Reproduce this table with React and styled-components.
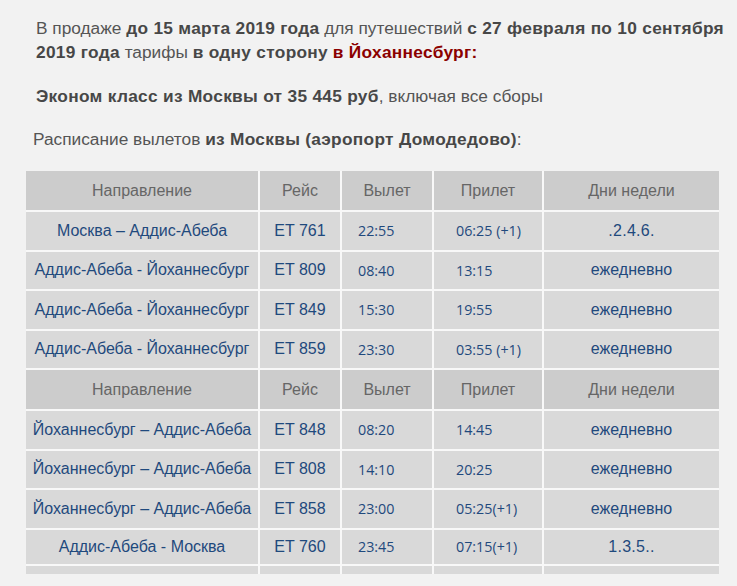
import styled, { createGlobalStyle } from 'styled-components'

const GlobalStyle = createGlobalStyle`
  body {
    margin: 0;
    background: #f2f2f2;
    font-family: "Liberation Sans", Arial, sans-serif;
  }
`

const outbound = [
  { route: 'Москва – Аддис-Абеба', flight: 'ET 761', dep: '22:55', arr: '06:25 (+1)', days: '.2.4.6.' },
  { route: 'Аддис-Абеба - Йоханнесбург', flight: 'ET 809', dep: '08:40', arr: '13:15', days: 'ежедневно' },
  { route: 'Аддис-Абеба - Йоханнесбург', flight: 'ET 849', dep: '15:30', arr: '19:55', days: 'ежедневно' },
  { route: 'Аддис-Абеба - Йоханнесбург', flight: 'ET 859', dep: '23:30', arr: '03:55 (+1)', days: 'ежедневно' },
]

const inbound = [
  { route: 'Йоханнесбург – Аддис-Абеба', flight: 'ET 848', dep: '08:20', arr: '14:45', days: 'ежедневно' },
  { route: 'Йоханнесбург – Аддис-Абеба', flight: 'ET 808', dep: '14:10', arr: '20:25', days: 'ежедневно' },
  { route: 'Йоханнесбург – Аддис-Абеба', flight: 'ET 858', dep: '23:00', arr: '05:25(+1)', days: 'ежедневно' },
  { route: 'Аддис-Абеба - Москва', flight: 'ET 760', dep: '23:45', arr: '07:15(+1)', days: '1.3.5..', short: true },
]

function HeadRow() {
  return (
    <tr>
      <Th>Направление</Th>
      <Th>Рейс</Th>
      <Th>Вылет</Th>
      <Th>Прилет</Th>
      <Th>Дни недели</Th>
    </tr>
  )
}

function FlightRow({ f }) {
  return (
    <Row $short={f.short}>
      <Td>{f.route}</Td>
      <Td>{f.flight}</Td>
      <TimeTd $pad={16}>{f.dep}</TimeTd>
      <TimeTd $pad={22}>{f.arr}</TimeTd>
      <Td $days={f.days !== 'ежедневно'}>{f.days}</Td>
    </Row>
  )
}

function App() {
  return (
    <Page>
      <GlobalStyle />
      <Intro>
        В продаже <b>до 15 марта 2019 года</b> для путешествий <b>с 27 февраля по 10 сентября 2019 года</b> тарифы <b>в одну сторону</b> <Red>в Йоханнесбург:</Red>
      </Intro>
      <Price>
        <b>Эконом класс из Москвы от 35 445 руб</b>, включая все сборы
      </Price>
      <Caption>
        Расписание вылетов <b>из Москвы (аэропорт Домодедово)</b>:
      </Caption>
      <Table>
        <colgroup>
          <col style={{ width: 233 }} />
          <col style={{ width: 82 }} />
          <col style={{ width: 92 }} />
          <col style={{ width: 110 }} />
          <col style={{ width: 176 }} />
        </colgroup>
        <tbody>
          <HeadRow />
          {outbound.map((f, i) => <FlightRow key={'o' + i} f={f} />)}
          <HeadRow />
          {inbound.map((f, i) => <FlightRow key={'i' + i} f={f} />)}
          <tr>
            <Spacer />
            <Spacer />
            <Spacer />
            <Spacer />
            <Spacer />
          </tr>
        </tbody>
      </Table>
    </Page>
  )
}

const Page = styled.div`
  width: 737px;
  height: 586px;
  padding: 16px 0 0 26px;
  box-sizing: border-box;
  overflow: hidden;
`

const Text = styled.p`
  margin: 0;
  font-size: 17.3px;
  line-height: 24px;
  color: #555555;
  white-space: nowrap;
  b {
    color: #474747;
    letter-spacing: 0.3px;
  }
`

const Intro = styled(Text)`
  margin-left: 10px;
  white-space: normal;
  width: 700px;
`

const Red = styled.b`
  && {
    color: #8b0000;
  }
`

const Price = styled(Text)`
  margin: 20px 0 0 10px;
`

const Caption = styled(Text)`
  margin: 19px 0 0 7px;
`

const Table = styled.table`
  margin-top: 20px;
  border-collapse: collapse;
  table-layout: fixed;
  width: 693px;
`

const Row = styled.tr`
  height: ${p => (p.$short ? '36px' : '39.5px')};
`

const Th = styled.td`
  height: 39px;
  padding: 0;
  background: #cccccc;
  border: 2px solid #f8f8f8;
  border-top: none;
  color: #666666;
  font-size: 16px;
  font-weight: normal;
  text-align: center;
  white-space: nowrap;
  &:first-child { border-left: none; }
  &:last-child { border-right: none; }
`

const Td = styled.td`
  padding: 0;
  background: #d9d9d9;
  border: 2px solid #f8f8f8;
  color: #1f497d;
  font-size: 16px;
  text-align: center;
  white-space: nowrap;
  letter-spacing: ${p => (p.$days ? '0.3px' : '0')};
  &:first-child { border-left: none; }
  &:last-child { border-right: none; }
`

const TimeTd = styled(Td)`
  text-align: left;
  padding-left: ${p => p.$pad}px;
  font-family: "Open Sans", "Noto Sans", sans-serif;
  font-size: 14.3px;
  letter-spacing: 0;
`

const Spacer = styled.td`
  height: 8px;
  padding: 0;
  background: #d9d9d9;
  border: 2px solid #f8f8f8;
  border-bottom: none;
  &:first-child { border-left: none; }
  &:last-child { border-right: none; }
`

export default App
